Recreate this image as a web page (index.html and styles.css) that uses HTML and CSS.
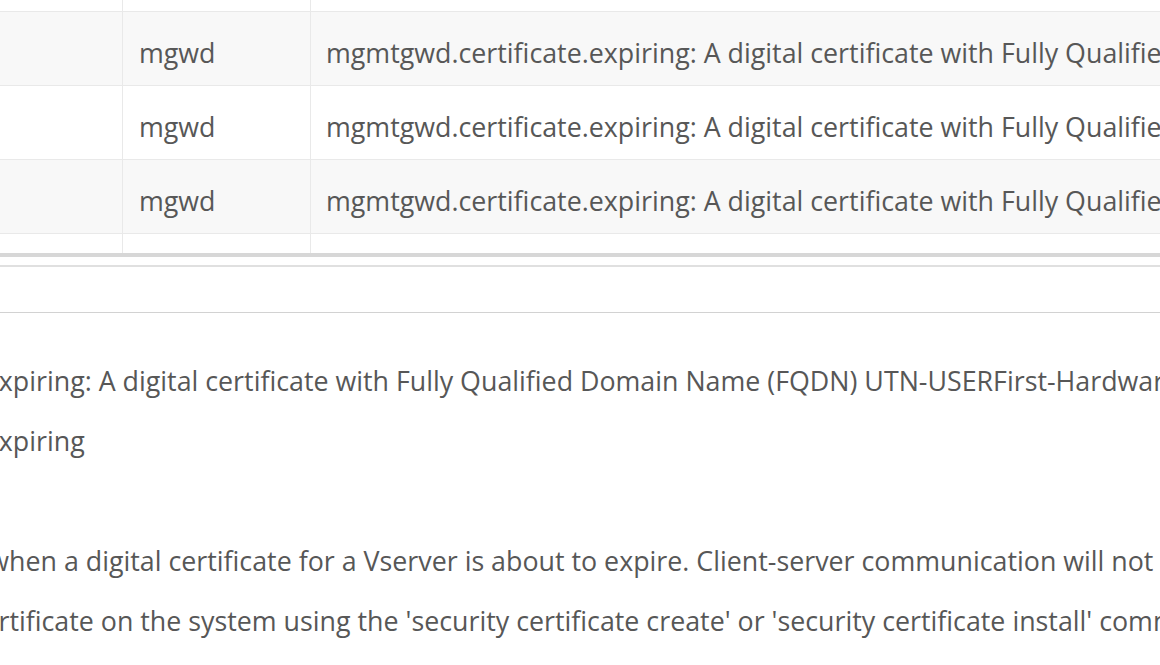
FILE: index.html
```html
<!DOCTYPE html>
<html>
    <head>
        <link rel="stylesheet" href="styles.css">
    </head>
    <body>
        <table class="events">
            <tr class="stub-top">
                <td class="col-node"></td>
                <td class="col-source"></td>
                <td class="col-msg"></td>
            </tr>
            <tr class="shade">
                <td class="col-node"></td>
                <td class="col-source">mgwd</td>
                <td class="col-msg">mgmtgwd.certificate.expiring: A digital certificate with Fully Qualifie</td>
            </tr>
            <tr>
                <td class="col-node"></td>
                <td class="col-source">mgwd</td>
                <td class="col-msg">mgmtgwd.certificate.expiring: A digital certificate with Fully Qualifie</td>
            </tr>
            <tr class="shade">
                <td class="col-node"></td>
                <td class="col-source">mgwd</td>
                <td class="col-msg">mgmtgwd.certificate.expiring: A digital certificate with Fully Qualifie</td>
            </tr>
            <tr class="stub-bottom">
                <td class="col-node"></td>
                <td class="col-source"></td>
                <td class="col-msg"></td>
            </tr>
        </table>

        <div class="splitter"></div>
        <div class="detail-bar"></div>

        <div class="details">
            <div class="line">mgmtgwd.certificate.expiring: A digital certificate with Fully Qualified Domain Name (FQDN) UTN-USERFirst-Hardwar</div>
            <div class="line">mgmtgwd.certificate.expiring</div>
            <div class="line"></div>
            <div class="line">This message is seen when a digital certificate for a Vserver is about to expire. Client-server communication will not b</div>
            <div class="line">Please install a new certificate on the system using the 'security certificate create' or 'security certificate install' comm</div>
        </div>
    </body>
</html>
```

FILE: styles.css
```css
html, body {
    margin: 0;
    padding: 0;
    background-color: white;
    overflow: hidden;
}

body {
    width: 1160px;
    height: 665px;
    font-family: "Open Sans", "Liberation Sans", sans-serif;
    font-size: 26.8px;
    color: #575757;
}

.events {
    border-collapse: collapse;
    width: 1500px;
    table-layout: fixed;
}

.events td {
    border: 1px solid #e9e9e9;
    padding: 8px 16px 0 16px;
    white-space: nowrap;
    overflow: hidden;
    vertical-align: middle;
    height: 65px;
}

.events .col-node {
    width: 90px;
    border-left: none;
}

.events .col-source {
    width: 155px;
}

.events .col-msg {
    padding-left: 15px;
    border-right: none;
}

.events tr.stub-top td {
    height: 11px;
    padding-top: 0;
    border-top: none;
}

.events tr.stub-bottom td {
    height: 19px;
    padding-top: 0;
    border-bottom: none;
}

.shade td {
    background-color: #f8f8f8;
}

.splitter {
    height: 4px;
    background-color: #d7d7d7;
    margin-bottom: 8px;
}

.detail-bar {
    height: 45px;
    border-top: 2px solid #e0e0e0;
    border-bottom: 1px solid #d2d2d2;
}

.details {
    margin-left: -279px;
    padding-top: 38px;
}

.details .line {
    height: 60px;
    line-height: 60px;
    white-space: nowrap;
}
```
